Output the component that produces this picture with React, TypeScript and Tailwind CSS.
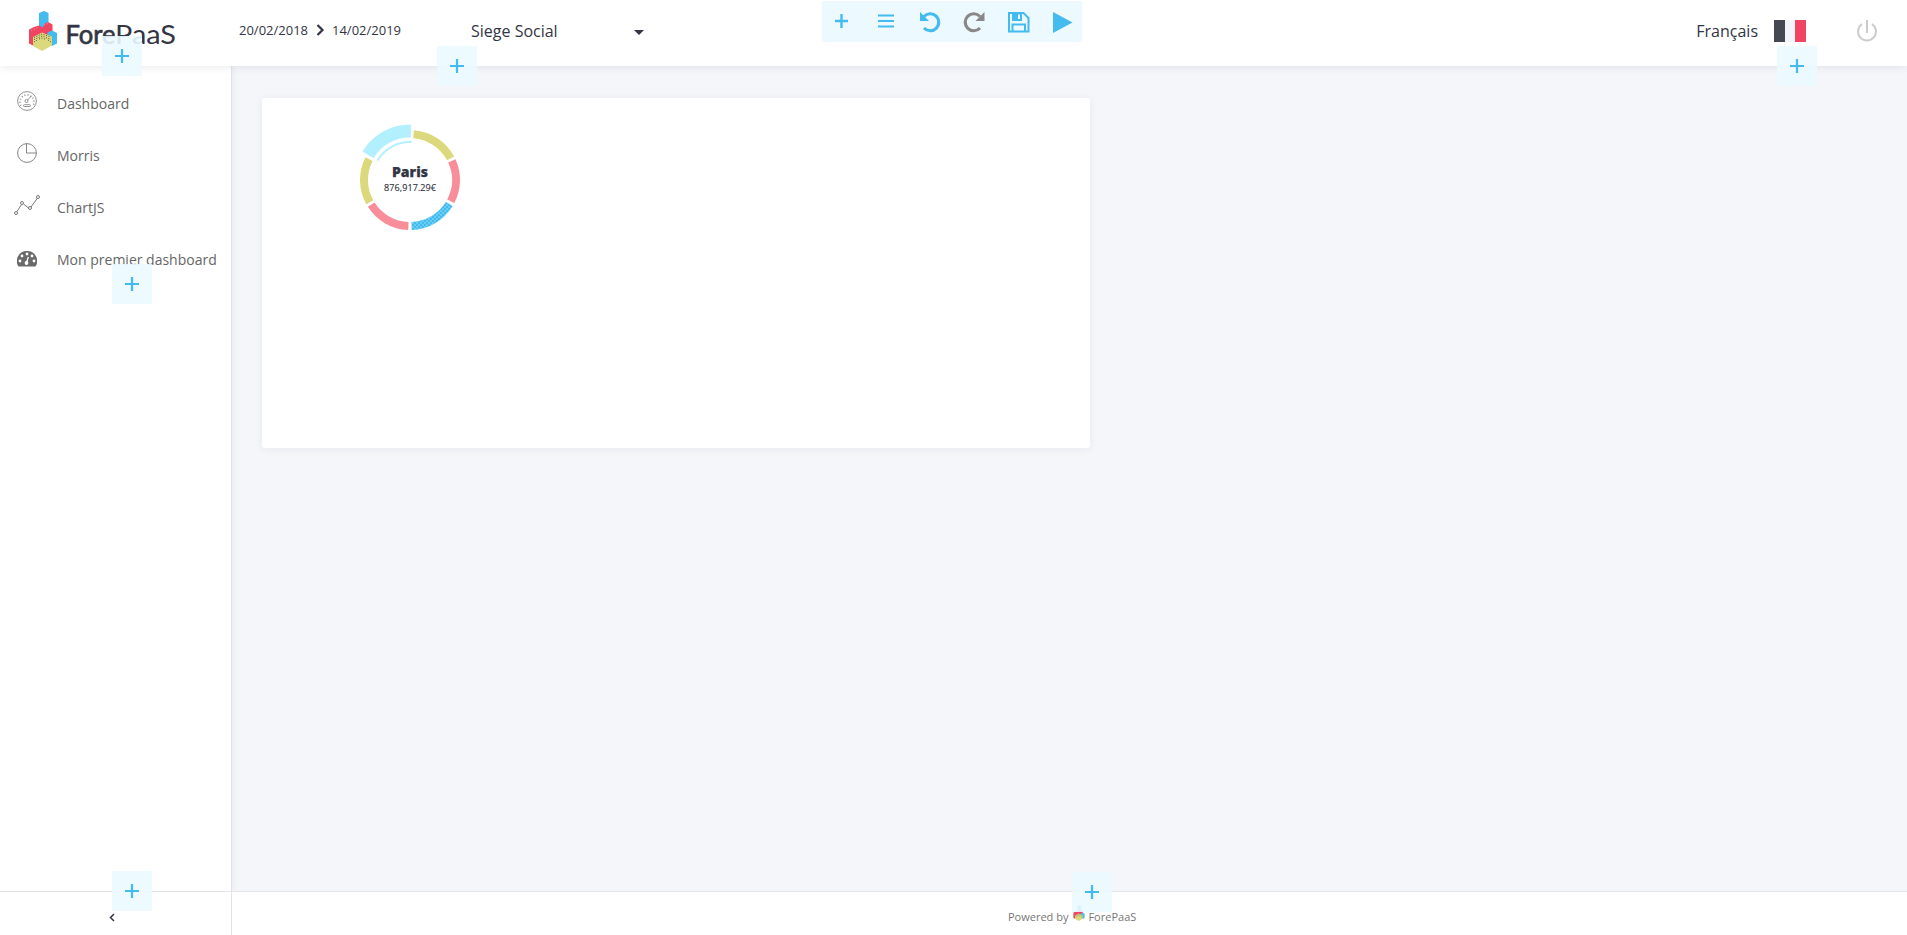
import React from "react";

function Add({ className }: { className: string }) {
  return (
    <button className={`absolute z-20 flex h-10 w-10 items-center justify-center bg-[#ebf9ff]/90 ${className}`}>
      <svg className="-ml-px" width="14" height="14" viewBox="0 0 14 14" stroke="#43bbef" strokeWidth="2.2">
        <path d="M7 0v14M0 7h14" />
      </svg>
    </button>
  );
}

function Mark({ className }: { className: string }) {
  return (
    <svg className={className} viewBox="0 0 28 40">
      <path d="M10 2l5-2 4.500 2v15h-9.500z" fill="#43bbef" />
      <path d="M0 18.500l5-2.500 5-1.500 4 2 1-3.500 4-2 4.500 2.500v8l-6 11-13.500 2-4-2z" fill="#ef4562" />
      <path d="M18.500 21.500l4.500-2 5 2.500v10.500l-5 2.500-4.500-2z" fill="#43bbef" />
      <path d="M4 26l9-4.500 10 4v9l-10 5.500-9-5z" fill="#dbd97c" />
      <path d="M5 26.500l8-3.500 9 3M5 28.500l8-3.500 9 3.500M5 31l4-2.500M22 31l-4-2.500M10 28l3-1 4 1.500" fill="none" stroke="#55543f" strokeWidth="1" strokeDasharray="1 1.600" />
      <path d="M2 19.500l7-3M15 14l4-1.500" fill="none" stroke="#f9a0ad" strokeWidth="1" strokeDasharray="1 2" />
    </svg>
  );
}

const point = (r: number, deg: number) => {
  const a = (deg * Math.PI) / 180;
  return `${(60 + r * Math.sin(a)).toFixed(2)} ${(60 - r * Math.cos(a)).toFixed(2)}`;
};
const ring = (r0: number, r1: number, a: number, b: number) =>
  `M${point(r1, a)}A${r1} ${r1} 0 0 1 ${point(r1, b)}L${point(r0, b)}A${r0} ${r0} 0 0 0 ${point(r0, a)}Z`;

const slices = [
  { a: 4.5, b: 62, fill: "#dbd97c" },
  { a: 65.5, b: 117.5, fill: "#f98d99" },
  { a: 121.5, b: 178, fill: "#43bbef" },
  { a: 182, b: 237.5, fill: "#f98d99" },
  { a: 241, b: 297, fill: "#dbd97c" },
];

function Donut() {
  return (
    <svg className="ml-[88px] mt-[20.5px] block h-[120px] w-[120px]" viewBox="0 0 120 120">
      <defs>
        <pattern id="dots" width="4" height="4" patternUnits="userSpaceOnUse">
          <circle cx="1" cy="1" r=".65" fill="#b3efff" />
          <circle cx="3" cy="3" r=".65" fill="#b3efff" />
        </pattern>
      </defs>
      {slices.map((s) => (
        <path key={s.a} d={ring(42, 50, s.a, s.b)} fill={s.fill} />
      ))}
      <path d={ring(42, 50, 121.5, 178)} fill="url(#dots)" />
      <path d={ring(42.5, 55.5, 301, 361)} fill="#b3f0ff" />
      <path d={ring(37, 39, 301, 362.5)} fill="#b3f0ff" />
      <text x="60" y="56.5" textAnchor="middle" fontSize="14" fontWeight="800" fill="#333544" stroke="#333544" strokeWidth=".25" textLength="36">Paris</text>
      <text x="60" y="70.5" textAnchor="middle" fontSize="9" fill="#333544" stroke="#333544" strokeWidth=".15" textLength="52">876,917.29€</text>
    </svg>
  );
}

const GaugeLine = () => (
  <svg width="20" height="20" viewBox="0 0 20 20" fill="none" stroke="#777" strokeWidth=".8">
    <circle cx="10" cy="10" r="9.400" />
    <path d="M4 14.500A7 7 0 1 1 16 14.500" strokeDasharray=".8 2.200" strokeWidth="1.600" />
    <circle cx="9.500" cy="10" r="1.500" fill="#fff" />
    <path d="M10.500 9l4-4" />
    <rect x="6.500" y="13.700" width="7" height="1.800" rx=".9" />
  </svg>
);
const PieLine = () => (
  <svg width="20" height="20" viewBox="0 0 20 20" fill="none" stroke="#777" strokeWidth=".9">
    <circle cx="10" cy="10" r="9.400" />
    <path d="M9.500 .6V10h9.900" />
  </svg>
);
const Line = () => (
  <svg width="26" height="20" viewBox="0 0 26 20" fill="none" stroke="#777" strokeWidth="1">
    <path d="M3 16.500L7.500 9.500M9.500 9l5 4M17 12L23.500 3" />
    <circle cx="2" cy="18" r="1.500" />
    <circle cx="8" cy="8" r="1.500" />
    <circle cx="16" cy="13" r="1.500" />
    <circle cx="24" cy="2" r="1.500" />
  </svg>
);
const Gauge = () => (
  <svg className="mt-[5px]" width="20" height="16" viewBox="0 0 20 16">
    <path d="M10 0A10 10 0 0 0 1.500 15.500h17A10 10 0 0 0 10 0z" fill="#6a6a6a" />
    <g fill="#fff">
      <circle cx="3" cy="10" r="1.400" />
      <circle cx="5" cy="5" r="1.400" />
      <circle cx="10" cy="3" r="1.400" />
      <circle cx="15" cy="5" r="1.400" />
      <circle cx="17" cy="10" r="1.400" />
      <circle cx="9.500" cy="12" r="1.900" />
    </g>
    <path d="M9.500 12L11.300 6" stroke="#fff" strokeWidth="1.300" />
  </svg>
);

const items = [
  { label: "Dashboard", icon: <GaugeLine /> },
  { label: "Morris", icon: <PieLine /> },
  { label: "ChartJS", icon: <Line /> },
  { label: "Mon premier dashboard", icon: <Gauge /> },
];

function Toolbar() {
  return (
    <div className="absolute left-[822px] top-px z-20 flex h-[41px] w-[260px] bg-[#ecf9ff]">
      <svg width="260" height="41" viewBox="0 0 260 41" fill="none" stroke="#43bbef">
        <path d="M19.500 13v14M13 20h13" strokeWidth="2.400" />
        <path d="M56 14.500h16M56 20h16M56 25.500h16" strokeWidth="2.200" />
        <path d="M102 15.500A8.500 8.500 0 1 1 102 27" strokeWidth="3.200" />
        <path d="M98 11v9h9z" fill="#43bbef" stroke="none" />
        <path d="M158 15.500A8.500 8.500 0 1 0 158 27" stroke="#888" strokeWidth="3.200" />
        <path d="M162.500 11v9h-9z" fill="#888" stroke="none" />
        <path d="M188 12h13.500l5 5v13.500H187V12zM190.500 30v-6.500h12.500v6.500" strokeWidth="2" />
        <path d="M190 12h10v8h-10zM196 13.500v4.500h2v-4.500z" fill="#43bbef" fillRule="evenodd" stroke="none" />
        <path d="M231 11l19.500 10.500L231 32z" fill="#43bbef" stroke="none" />
      </svg>
    </div>
  );
}

export default function App() {
  return (
    <div className="relative flex h-[935px] w-[1907px] flex-col overflow-hidden bg-[#f4f6fa] font-['Open_Sans','Noto_Sans',sans-serif] text-[#333544]">
      <header className="relative z-10 flex h-[66px] shrink-0 items-center bg-white shadow-[0_1px_8px_rgba(50,50,80,0.10)]">
        <div className="flex w-[239px] items-center pl-[29px]">
          <Mark className="-mt-[4px] h-10 w-7" />
          <svg className="ml-2 h-8 w-[114px]" viewBox="0 0 114 32" fontFamily="Lato, sans-serif" fontSize="27.500" fill="#333544">
            <text x="0.500" y="27" stroke="#333544" strokeWidth=".7" textLength="50" lengthAdjust="spacingAndGlyphs">Fore</text>
            <text x="50" y="27" textLength="61" lengthAdjust="spacingAndGlyphs">PaaS</text>
          </svg>
        </div>
        <div className="-mt-[5px] flex items-center text-[13px]">
          <span className="w-[70px]">20/02/2018</span>
          <svg className="-mt-[2px] mx-[7px]" width="9" height="12" viewBox="0 0 9 12" fill="none" stroke="#333544" strokeWidth="2.200">
            <path d="M1.500 1l5 5-5 5" />
          </svg>
          <span>14/02/2019</span>
        </div>
        <div className="ml-[70px] -mt-[5px] flex w-[173px] items-center justify-between text-[16px]">
          <span>Siege Social</span>
          <svg className="mt-[3px]" width="10" height="5" viewBox="0 0 10 5"><path d="M0 0h10L5 5z" fill="#333544" /></svg>
        </div>
        <div className="ml-auto -mt-[5px] flex items-center">
          <span className="text-[16px]">Français</span>
          <div className="ml-4 flex h-[22px] w-8">
            <div className="flex-1 bg-[#454754]" />
            <div className="flex-1 bg-[#f3f4f9]" />
            <div className="flex-1 bg-[#ef4562]" />
          </div>
          <svg className="ml-[50px] mr-[29px]" width="22" height="22" viewBox="0 0 22 22" fill="none" stroke="#ccc" strokeWidth="2">
            <path d="M11 0v13M6 4A9 9 0 1 0 16 4" />
          </svg>
        </div>
      </header>
      <div className="flex min-h-0 flex-1">
        <nav className="w-[232px] shrink-0 border-r border-[#e1e3e9] bg-white pt-[11px] shadow-[1px_0_6px_rgba(50,50,80,0.07)]">
          {items.map((it) => (
            <a key={it.label} className="flex h-[52px] items-center text-[14px] text-[#666]">
              <span className="-mt-[5px] flex w-[54px] shrink-0 justify-center">{it.icon}</span>
              <span className="ml-[3px] whitespace-nowrap">{it.label}</span>
            </a>
          ))}
        </nav>
        <main className="flex-1 pl-[30px] pt-8">
          <section className="h-[350px] w-[828px] rounded-[3px] bg-white pt-px shadow-[0_1px_8px_rgba(50,50,80,0.07)]">
            <Donut />
          </section>
        </main>
      </div>
      <footer className="flex h-[44px] shrink-0 border-t border-[#e1e3e9] bg-white">
        <div className="flex w-[232px] items-center justify-center border-r border-[#e1e3e9] pr-2">
          <svg className="mt-[8px]" width="6" height="9" viewBox="0 0 6 9" fill="none" stroke="#333544" strokeWidth="1.500"><path d="M5 1L1.500 4.500 5 8" /></svg>
        </div>
        <div className="flex flex-1 items-center pl-[776px] pt-[7px] text-[11px] text-[#777]">
          <span>Powered by</span>
          <Mark className="-mt-[8px] ml-[5px] mr-[3px] h-[16px] w-[12px]" />
          <span>ForePaaS</span>
        </div>
      </footer>
      <Toolbar />
      <Add className="left-[102px] top-9" />
      <Add className="left-[437px] top-[46px]" />
      <Add className="left-[1777px] top-[46px]" />
      <Add className="left-[112px] top-[264px]" />
      <Add className="left-[112px] top-[871px]" />
      <Add className="left-[1072px] top-[872px]" />
    </div>
  );
}
